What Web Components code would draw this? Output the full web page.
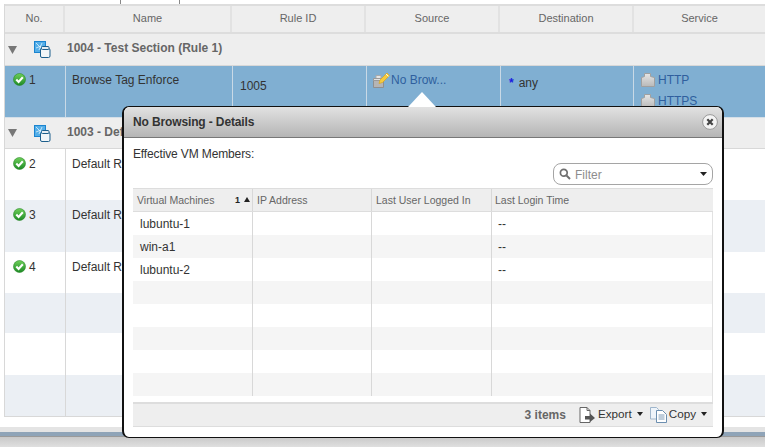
<!DOCTYPE html>
<html><head><meta charset="utf-8"><title>Rules</title>
<style>
html,body{margin:0;padding:0;background:#fff;width:765px;height:447px;overflow:hidden;font:12px "Liberation Sans",Arial,sans-serif;color:#333}
</style></head><body>
<fw-page></fw-page>
<script>
const svgs={
 check:`<svg width="13" height="13" viewBox="0 0 13 13"><defs><linearGradient id="g" x1="0" y1="0" x2="0" y2="1"><stop offset="0" stop-color="#6fd05a"/><stop offset="1" stop-color="#1d8a25"/></linearGradient></defs><circle cx="6.500" cy="6.500" r="6" fill="url(#g)" stroke="#2a8a2a" stroke-width=".6"/><path d="M3.300 6.500l2.300 2.400 4.200-4.700" fill="none" stroke="#fff" stroke-width="2.100"/></svg>`,
 section:`<svg width="17" height="17" viewBox="0 0 17 17"><rect x="0" y="0" width="12" height="12" fill="#1b84cf"/><rect x="1" y="1" width="10" height="10" fill="#54aee8"/><path d="M2 2l5 5M8 2L5 9M2 7l5-2" stroke="#dff2fd" stroke-width=".8"/><rect x="6.500" y="7.500" width="9.500" height="9" rx="1.500" fill="#f2f6f8" stroke="#1d5f8c"/><rect x="7.500" y="5.500" width="7.500" height="3" rx="1" fill="#e8eef2" stroke="#1d5f8c"/></svg>`,
 tri:`<svg width="9" height="8" viewBox="0 0 9 8"><path d="M0 0h9L4.500 8z" fill="#777"/></svg>`,
 group:`<svg width="17" height="16" viewBox="0 0 17 16"><path d="M.5 6.500h10v9H.5z" fill="#b5b5b5" stroke="#8f8f8f"/><path d="M.5 6.500h10v2H.5z" fill="#e0e0e0" stroke="#9a9a9a"/><path d="M3 6V3.500h5V6" fill="#e4e4e4" stroke="#aaa"/><path d="M7 8l7-7 2.500 2.500-7 7-3.500 1z" fill="#f5cb3f" stroke="#d9a61f" stroke-width=".7"/><path d="M13 2l2.500 2.500" stroke="#fff" stroke-width=".8"/></svg>`,
 service:`<svg width="14" height="14" viewBox="0 0 14 14"><defs><linearGradient id="s" x1="0" y1="0" x2="0" y2="1"><stop offset="0" stop-color="#e6e6e6"/><stop offset="1" stop-color="#b9b9b9"/></linearGradient></defs><path d="M.5 4.500l3-1V.5h6v3l4 1v9H.5z" fill="url(#s)" stroke="#a0a0a0"/></svg>`,
 search:`<svg width="12" height="12" viewBox="0 0 12 12"><circle cx="4.800" cy="4.800" r="3.400" fill="none" stroke="#6f6f6f" stroke-width="1.700"/><path d="M7.500 7.500l3.500 3.500" stroke="#6f6f6f" stroke-width="2"/></svg>`,
 down:`<svg width="7" height="4" viewBox="0 0 7 4"><path d="M0 0h7L3.500 4z" fill="#222"/></svg>`,
 export:`<svg width="17" height="16" viewBox="0 0 17 16"><path d="M1 .5h7l3 3V15.500H1z" fill="#fff" stroke="#666"/><path d="M8 .5v3h3" fill="none" stroke="#666"/><path d="M6 9h5V6.500L16 11l-5 4v-2.500H6z" fill="#555"/></svg>`,
 copy:`<svg width="17" height="16" viewBox="0 0 17 16"><path d="M.5.500h6l2 2V12H.5z" fill="#eef4fa" stroke="#9fb6cc"/><path d="M6.500 3.500h6l4 4v8h-10z" fill="#fff" stroke="#6c8fb0"/><path d="M8.500 8h6M8.500 10h6M8.500 12h6" stroke="#7f9cb8"/></svg>`,
 close:`<svg width="16" height="16" viewBox="0 0 16 16"><circle cx="8" cy="8" r="7.400" fill="#f4f4f4" stroke="#999"/><path d="M5.300 5.300l5.400 5.400M10.700 5.300l-5.400 5.400" stroke="#444" stroke-width="2.200"/></svg>`
};
class FwIcon extends HTMLElement{
 constructor(){super();this.attachShadow({mode:'open'});}
 connectedCallback(){this.shadowRoot.innerHTML=`<style>:host{display:inline-flex;flex:none;line-height:0}</style>`+svgs[this.getAttribute('name')];}
}
customElements.define('fw-icon',FwIcon);

const GRID='grid-template-columns:61px 167px 134px 134px 133px 131px';
class FwHeader extends HTMLElement{
 constructor(){super();this.attachShadow({mode:'open'}).innerHTML=`<style>
 :host{display:grid;grid-template-columns:60px 167px 134px 134px 134px 131px;height:26px;background:#eee;border-top:2px solid #ddd;border-bottom:2px solid #ddd;font-size:11px;color:#666}
 div{display:flex;align-items:center;justify-content:center;border-right:2px solid #e2e2e2;box-sizing:border-box;padding-bottom:2px}
 div:last-child{border-right:0}
 </style><div>No.</div><div>Name</div><div>Rule ID</div><div>Source</div><div>Destination</div><div>Service</div>`;}
}
customElements.define('fw-header',FwHeader);

class FwSection extends HTMLElement{
 constructor(){super();this.attachShadow({mode:'open'}).innerHTML=`<style>
 :host{display:flex;align-items:center;height:var(--h,31px);background:#eee;border-bottom:1px solid #d8d8d8;font-weight:bold;color:#666}
 .t{margin-left:3px;display:flex}.i{margin-left:17px;display:flex}.l{margin-left:16px;margin-top:-3px}
 </style><span class="t"><fw-icon name="tri"></fw-icon></span><span class="i"><fw-icon name="section"></fw-icon></span><span class="l"><slot></slot></span>`;}
}
customElements.define('fw-section',FwSection);

class FwRow extends HTMLElement{
 constructor(){super();this.attachShadow({mode:'open'}).innerHTML=`<style>
 :host{display:grid;${GRID};height:var(--h,52px);box-sizing:border-box;color:#333;font-size:12px;background:#fff;--pt:8px}
 :host([sel]){background:#80afd2;border-bottom:1px solid #d4dfe8;--pt:7px}
 :host([alt]){background:#ebeff4}
 .c{border-right:1px solid #d8d8d8;box-sizing:border-box;padding:var(--pt) 0 0 7px;min-width:0;overflow:hidden}
 :host([sel]) .c{border-right-color:#c9d9e6}
 .c:last-child{border-right:0}
 .no{padding-left:8px}
 .n{padding-left:6px}
 .s{padding-left:6px}
 </style>
 <div class="c no"><slot name="no"></slot></div><div class="c n"><slot name="name"></slot></div><div class="c"><slot name="id"></slot></div><div class="c s"><slot name="src"></slot></div><div class="c"><slot name="dst"></slot></div><div class="c"><slot name="svc"></slot></div>`;}
}
customElements.define('fw-row',FwRow);

class FwStatus extends HTMLElement{
 constructor(){super();this.attachShadow({mode:'open'}).innerHTML=`<style>:host{display:flex;gap:3px;align-items:center;height:13px}</style><fw-icon name="check"></fw-icon><slot></slot>`;}
}
customElements.define('fw-status',FwStatus);

class FwLink extends HTMLElement{
 constructor(){super();this.attachShadow({mode:'open'}).innerHTML=`<style>:host{display:flex;align-items:center;gap:var(--g,3px);color:#2f5f9e;height:14px;margin-bottom:7px}</style><fw-icon></fw-icon><slot></slot>`;
 }
 connectedCallback(){const i=this.shadowRoot.querySelector('fw-icon');i.setAttribute('name',this.getAttribute('icon'));i.connectedCallback();}
}
customElements.define('fw-link',FwLink);

class FwFilter extends HTMLElement{
 constructor(){super();this.attachShadow({mode:'open'}).innerHTML=`<style>
 :host{display:flex;align-items:center;width:160px;height:22px;box-sizing:border-box;border:1px solid #a5a5a5;border-radius:8px;background:#fff;color:#8d8d8d;padding:0 5px;gap:4px;font-size:12px}
 span{flex:1;padding-top:1px}
 </style><fw-icon name="search"></fw-icon><span>Filter</span><fw-icon name="down"></fw-icon>`;}
}
customElements.define('fw-filter',FwFilter);

class FwVmTable extends HTMLElement{
 constructor(){super();
 const cols='grid-template-columns:120px 119px 120px 1fr';
 const rows=[['lubuntu-1','--'],['win-a1','--'],['lubuntu-2','--'],[],[],[],[],[]];
 this.attachShadow({mode:'open'}).innerHTML=`<style>
 :host{display:block;width:580px;font-size:12px;color:#333}
 .h{display:grid;${cols};height:22px;background:#eee;border-top:1px solid #ddd;border-bottom:1px solid #ddd;font-size:10.500px;color:#666}
 .h div{display:flex;align-items:center;padding-left:4px;border-right:1px solid #d8d8d8;padding-bottom:1px}
 .h div:first-child{justify-content:space-between;padding-right:2px}
 .h div:last-child{border-right:0;padding-left:3px}
 .s{color:#222;font-size:9px;font-weight:bold;display:flex;align-items:center;gap:4px}
 .body{border-right:1px solid #e2e2e2;padding-bottom:6px}
 .r{display:grid;${cols};height:23px}
 .r:nth-child(even){background:#f5f5f5}
 .r div{border-right:1px solid #d8d8d8;padding:0 7px;display:flex;align-items:center}
 .r div:last-child{border-right:0;padding-left:6px}
 .f{height:22px;display:flex;align-items:center;justify-content:flex-end;background:#eee;border-top:2px solid #ddd;border-bottom:1px solid #ddd;padding-right:6px;color:#333}
 .f .n{color:#666;font-weight:bold;margin-right:6px}
 .b{display:flex;align-items:center;gap:2px;margin-left:7px;font-size:11.700px}
 .b span{margin-top:-3px}
 .tri{width:0;height:0;border:3.500px solid transparent;border-top:4px solid #222;border-bottom:0;margin-left:3px;margin-top:-2px}
 .up{width:0;height:0;border:3px solid transparent;border-bottom:5px solid #222;border-top:0}
 </style>
 <div class="h"><div><span>Virtual Machines</span><span class="s">1<i class="up"></i></span></div><div>IP Address</div><div>Last User Logged In</div><div>Last Login Time</div></div>
 <div class="body">${rows.map(r=>`<div class="r"><div>${r[0]||''}</div><div></div><div></div><div>${r[1]||''}</div></div>`).join('')}</div>
 <div class="f"><span class="n">3 items</span><span class="b"><fw-icon name="export"></fw-icon><span>Export</span><i class="tri"></i></span><span class="b"><fw-icon name="copy"></fw-icon><span>Copy</span><i class="tri"></i></span></div>`;}
}
customElements.define('fw-vm-table',FwVmTable);

class FwDialog extends HTMLElement{
 constructor(){super();this.attachShadow({mode:'open'}).innerHTML=`<style>
 :host{position:absolute;left:122px;top:106px;width:602px;height:332px;box-sizing:border-box;border:solid #111;border-width:1px 2px 1px 2px;border-radius:7px;background:#fff;display:flex;flex-direction:column}
 .arrow{position:absolute;left:284px;top:-15px;width:0;height:0;border:14px solid transparent;border-top:0;border-bottom:15px solid #fff}
 header{flex:none;height:30px;background:linear-gradient(#e2e2e2,#b5b5b5);border-bottom:1px solid #777;border-radius:6px 6px 0 0;display:flex;align-items:center;justify-content:space-between;padding:0 4px 0 9px;font-weight:bold;color:#333;letter-spacing:-.13px}
 main{padding:9px 0 0 9px;display:flex;flex-direction:column}
 .lab{height:16px;letter-spacing:-.13px}
 .fr{display:flex;justify-content:flex-end;margin:0 9px 3px 0}
 </style><i class="arrow"></i><header><span>No Browsing - Details</span><fw-icon name="close"></fw-icon></header><main><div class="lab">Effective VM Members:</div><div class="fr"><fw-filter></fw-filter></div><fw-vm-table></fw-vm-table></main>`;}
}
customElements.define('fw-dialog',FwDialog);

class FwPage extends HTMLElement{
 constructor(){super();this.attachShadow({mode:'open'}).innerHTML=`<style>
 :host{display:block;position:relative;width:765px;height:447px;overflow:hidden;background:#fff}
 .ticks{height:4px;display:flex;margin-left:120px;gap:58px}
 .ticks i{width:1px;background:#888}
 .grid{margin-left:4px;border-left:1px solid #d8d8d8;border-bottom:1px solid #d8d8d8;height:412px;overflow:hidden}
 .foot{margin-top:10px;height:5px;background:#e4e4e4}
 .stripe{height:5px;background:#8fa4b8;border-bottom:1px solid #9a9a9a;box-sizing:border-box}
 .bot{height:14px;background:linear-gradient(#c9c9c9,#e8e8e8)}
 .any{display:flex;align-items:center;gap:5px;margin:3px 0 0 1px}
 .any b{color:#1a1ae0;font-size:12px;font-weight:bold;line-height:10px}
 .id{display:block;margin-top:6px}
 .src{--g:1px}
 </style>
 <div class="ticks"><i></i><i></i></div>
 <div class="grid">
  <fw-header></fw-header>
  <fw-section>1004 - Test Section (Rule 1)</fw-section>
  <fw-row sel><fw-status slot="no">1</fw-status><span slot="name">Browse Tag Enforce</span><span slot="id" class="id">1005</span><fw-link slot="src" class="src" icon="group">No Brow...</fw-link><span slot="dst" class="any"><b>*</b>any</span><span slot="svc"><fw-link icon="service">HTTP</fw-link><fw-link icon="service">HTTPS</fw-link></span></fw-row>
  <fw-section style="--h:30px">1003 - Default Section</fw-section>
  <fw-row style="--h:51px"><fw-status slot="no">2</fw-status><span slot="name">Default Rule</span></fw-row>
  <fw-row alt><fw-status slot="no">3</fw-status><span slot="name">Default Rule</span></fw-row>
  <fw-row style="--h:41px"><fw-status slot="no">4</fw-status><span slot="name">Default Rule</span></fw-row>
  <fw-row alt style="--h:40px"></fw-row>
  <fw-row style="--h:42px"></fw-row>
  <fw-row alt style="--h:41px"></fw-row>
 </div>
 <div class="foot"></div><div class="stripe"></div><div class="bot"></div>
 <fw-dialog></fw-dialog>`;}
}
customElements.define('fw-page',FwPage);
</script></body></html>
